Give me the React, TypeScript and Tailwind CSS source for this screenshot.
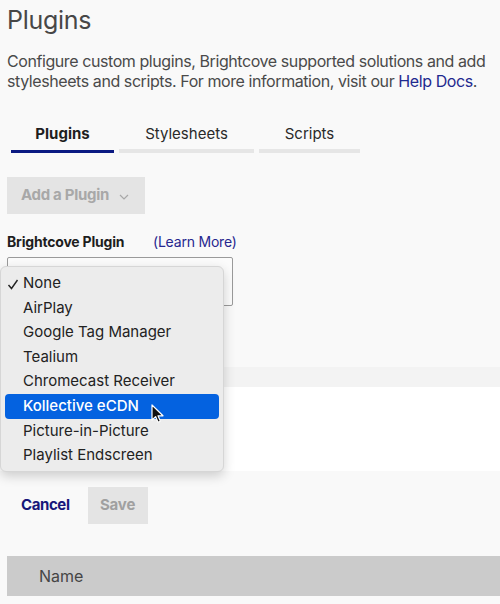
import React from "react";

const items = [
  "None",
  "AirPlay",
  "Google Tag Manager",
  "Tealium",
  "Chromecast Receiver",
  "Kollective eCDN",
  "Picture-in-Picture",
  "Playlist Endscreen",
];

export default function App() {
  return (
    <div
      className="relative w-[500px] h-[604px] overflow-hidden bg-[#f9f9f9]"
      style={{ fontFamily: "Inter, 'Noto Sans', sans-serif" }}
    >
      <div className="px-[7px] pt-[4px]">
        <h1 className="text-[25px] leading-[32px] text-[#474747] font-normal tracking-[-0.3px]">Plugins</h1>
        <p className="mt-[15px] w-[490px] text-[16px] leading-[20px] text-[#4a4a4a] tracking-[-0.42px]">
          Configure custom plugins, Brightcove supported solutions and add stylesheets and scripts. For more
          information, visit our <span className="text-[#1f2a8f]">Help Docs</span>.
        </p>

        <div className="mt-[33px] ml-[4px] flex gap-[5px]">
          <div className="w-[103px] flex flex-col items-center">
            <span className="text-[15px] leading-[20px] font-bold text-[#1e1e1e]">Plugins</span>
            <div className="mt-[6px] h-[3px] w-full bg-[#0b1a82]" />
          </div>
          <div className="w-[135px] flex flex-col items-center">
            <span className="text-[15px] leading-[20px] text-[#2a2a2a]">Stylesheets</span>
            <div className="mt-[5px] h-[4px] w-full bg-[#e6e6e6]" />
          </div>
          <div className="w-[101px] flex flex-col items-center">
            <span className="text-[15px] leading-[20px] text-[#2a2a2a]">Scripts</span>
            <div className="mt-[5px] h-[4px] w-full bg-[#e6e6e6]" />
          </div>
        </div>

        <div className="mt-[24px] w-[138px] h-[37px] bg-[#e4e4e4] flex items-center pl-[14px] gap-[10px]">
          <span className="text-[15px] font-bold text-[#a8a8a8] tracking-[-0.3px]">Add a Plugin</span>
          <svg width="10" height="6" viewBox="0 0 10 6" className="mt-[2px]">
            <path d="M1 1l4 4 4-4" fill="none" stroke="#a8a8a8" strokeWidth="1.2" />
          </svg>
        </div>

        <div className="mt-[18px] flex items-baseline">
          <span className="text-[14px] leading-[20px] font-bold text-[#1e1e1e] w-[146px] tracking-[-0.2px]">
            Brightcove Plugin
          </span>
          <span className="text-[14px] leading-[20px] text-[#27278f] tracking-[-0.2px]">(Learn More)</span>
        </div>

        <div className="mt-[5px] w-[226px] h-[49px] border border-[#9a9a9a] rounded-[2px] bg-[#fbfbfb]" />
      </div>

      <div className="mt-[61px] h-[20px] bg-[#f3f3f3]" />
      <div className="h-[84px] bg-white" />

      <div className="mt-[16px] flex items-center px-[21px]">
        <span className="text-[15px] font-bold text-[#17177a] tracking-[-0.4px]">Cancel</span>
        <div className="ml-[18px] w-[60px] h-[37px] bg-[#e4e4e4] flex items-center justify-center">
          <span className="text-[15px] font-bold text-[#a0a0a0] tracking-[-0.2px]">Save</span>
        </div>
      </div>

      <div className="mt-[32px] ml-[7px] h-[40px] bg-[#cbcbcb] flex items-center pl-[32px]">
        <span className="text-[16px] text-[#454545]">Name</span>
      </div>

      {/* dropdown menu */}
      <div className="absolute left-0 top-[266px] w-[224px] h-[206px] rounded-[6px] bg-[#ececec] border border-[#d6d6d6] shadow-[0_4px_12px_rgba(0,0,0,0.18)] pt-[4px]">
        {items.map((it) => {
          const sel = it === "Kollective eCDN";
          return (
            <div
              key={it}
              className={
                sel
                  ? "mx-[4px] h-[24.6px] rounded-[4px] bg-[#0462e0] flex items-center pl-[18px] relative"
                  : "mx-[4px] h-[24.6px] flex items-center pl-[18px] relative"
              }
            >
              {it === "None" && (
                <svg width="12" height="11" viewBox="0 0 12 11" className="absolute left-[2px] top-[8px]">
                  <path d="M1.5 6l3 3.5L10.5 1" fill="none" stroke="#222" strokeWidth="1.4" />
                </svg>
              )}
              <span className={sel ? "text-[15px] text-white font-medium" : "text-[15px] text-[#222]"}>{it}</span>
            </div>
          );
        })}
      </div>

      {/* cursor */}
      <svg width="14" height="20" viewBox="0 0 14 20" className="absolute left-[151px] top-[404px]">
        <path
          d="M1 1v15l3.6-3.4 2.4 5.6 2.4-1-2.4-5.4H12z"
          fill="#111"
          stroke="#fff"
          strokeWidth="1.2"
          strokeLinejoin="round"
        />
      </svg>
    </div>
  );
}
